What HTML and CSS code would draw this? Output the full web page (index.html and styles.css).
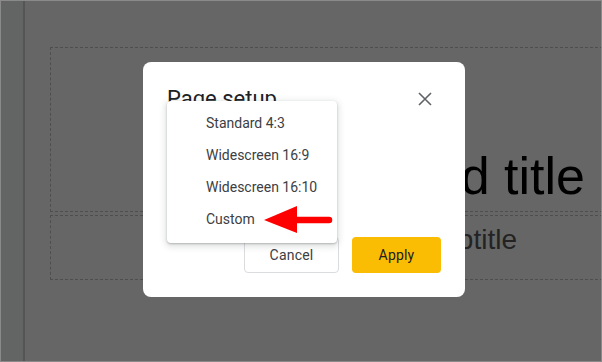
FILE: index.html
```html
<!DOCTYPE html>
<html lang="en">
<head>
    <meta charset="UTF-8">
    <meta name="viewport" content="width=device-width, initial-scale=1.0">
    <title>Page setup</title>
    <link rel="stylesheet" href="styles.css">
</head>
<body>

<div class="screen">
    <!-- Left edge of the editor -->
    <div class="rail"></div>

    <!-- Slide canvas -->
    <div class="slide">
        <div class="placeholder title-box">Click to add title</div>
        <div class="placeholder subtitle-box">Click to add subtitle</div>
    </div>

    <!-- Modal backdrop -->
    <div class="backdrop">
        <div class="dialog">
            <div class="dialog-header">
                <h2 class="dialog-title">Page setup</h2>
                <svg class="close" width="24" height="24" viewBox="0 0 24 24">
                    <path d="M6 6 L18 18 M18 6 L6 18" stroke="#5f6368" stroke-width="1.6" fill="none"/>
                </svg>
            </div>

            <div class="dialog-footer">
                <button class="btn btn-cancel">Cancel</button>
                <button class="btn btn-apply">Apply</button>
            </div>

            <!-- Size menu (open) -->
            <ul class="size-menu">
                <li>Standard 4:3</li>
                <li>Widescreen 16:9</li>
                <li>Widescreen 16:10</li>
                <li>Custom</li>
            </ul>

            <svg class="pointer" width="80" height="36" viewBox="0 0 80 36">
                <line x1="36" y1="18" x2="71" y2="18" stroke="#ff0000" stroke-width="6.5" stroke-linecap="round"/>
                <polygon points="6,18 39,4 39,31" fill="#ff0000"/>
            </svg>
        </div>
    </div>
</div>

</body>
</html>
```

FILE: styles.css
```css
body {
    margin: 0;
    padding: 0;
    overflow: hidden;
    font-family: Roboto, "Liberation Sans", Arial, sans-serif;
}
.screen {
    position: relative;
    display: flex;
    width: 602px;
    height: 362px;
    box-sizing: border-box;
    border: 1px solid #8a8a8a;
    background-color: #fff;
    overflow: hidden;
}
.rail {
    width: 22px;
    flex-shrink: 0;
    background-color: #f8f9fa;
    border-right: 2px solid #d4d4d4;
}
.slide {
    flex-shrink: 0;
    padding: 46px 0 0 25px;
    font-family: "Liberation Sans", Arial, sans-serif;
}
.placeholder {
    width: 598px;
    border: 1px dashed #c4c4c4;
    text-align: right;
    white-space: nowrap;
}
.title-box {
    padding: 98px 62px 0 0;
    box-sizing: border-box;
    height: 165px;
    font-size: 52px;
    line-height: 60px;
    color: #000;
}
.subtitle-box {
    margin-top: 3px;
    height: 65px;
    box-sizing: border-box;
    padding: 8px 130px 0 0;
    font-size: 28px;
    line-height: 32px;
    color: #595959;
}
.backdrop {
    position: absolute;
    top: 0;
    left: 0;
    right: 0;
    bottom: 0;
    padding: 61px 0 0 142px;
    background-color: rgba(0, 0, 0, 0.6);
}
.dialog {
    position: relative;
    display: flex;
    flex-direction: column;
    width: 322px;
    height: 235px;
    box-sizing: border-box;
    padding: 23px 24px 24px 24px;
    background-color: #fff;
    border-radius: 8px;
}
.dialog-header {
    display: flex;
    justify-content: space-between;
    align-items: center;
    margin-right: 4px;
}
.dialog-title {
    margin: 0;
    font-size: 22px;
    font-weight: 400;
    line-height: 28px;
    color: #202124;
}
.dialog-footer {
    display: flex;
    justify-content: flex-end;
    gap: 13px;
    margin-top: auto;
}
.btn {
    height: 36px;
    border-radius: 4px;
    font-family: Roboto, sans-serif;
    font-size: 14px;
    font-weight: 400;
    letter-spacing: 0.2px;
    cursor: pointer;
}
.btn-cancel {
    width: 95px;
    background-color: #fff;
    border: 1px solid #dadce0;
    color: #3c4043;
}
.btn-apply {
    width: 89px;
    background-color: #fbbc04;
    border: none;
    color: #202124;
}
.size-menu {
    position: absolute;
    top: 39px;
    left: 24px;
    width: 170px;
    margin: 0;
    padding: 6px 0 8px;
    list-style: none;
    background-color: #fff;
    border-radius: 4px;
    box-shadow: 0 1px 2px rgba(60, 64, 67, 0.3), 0 2px 6px 2px rgba(60, 64, 67, 0.15);
}
.size-menu li {
    padding-left: 39px;
    font-size: 14px;
    line-height: 32px;
    color: #3c4043;
}
.pointer {
    position: absolute;
    left: 115px;
    top: 140px;
}
```
